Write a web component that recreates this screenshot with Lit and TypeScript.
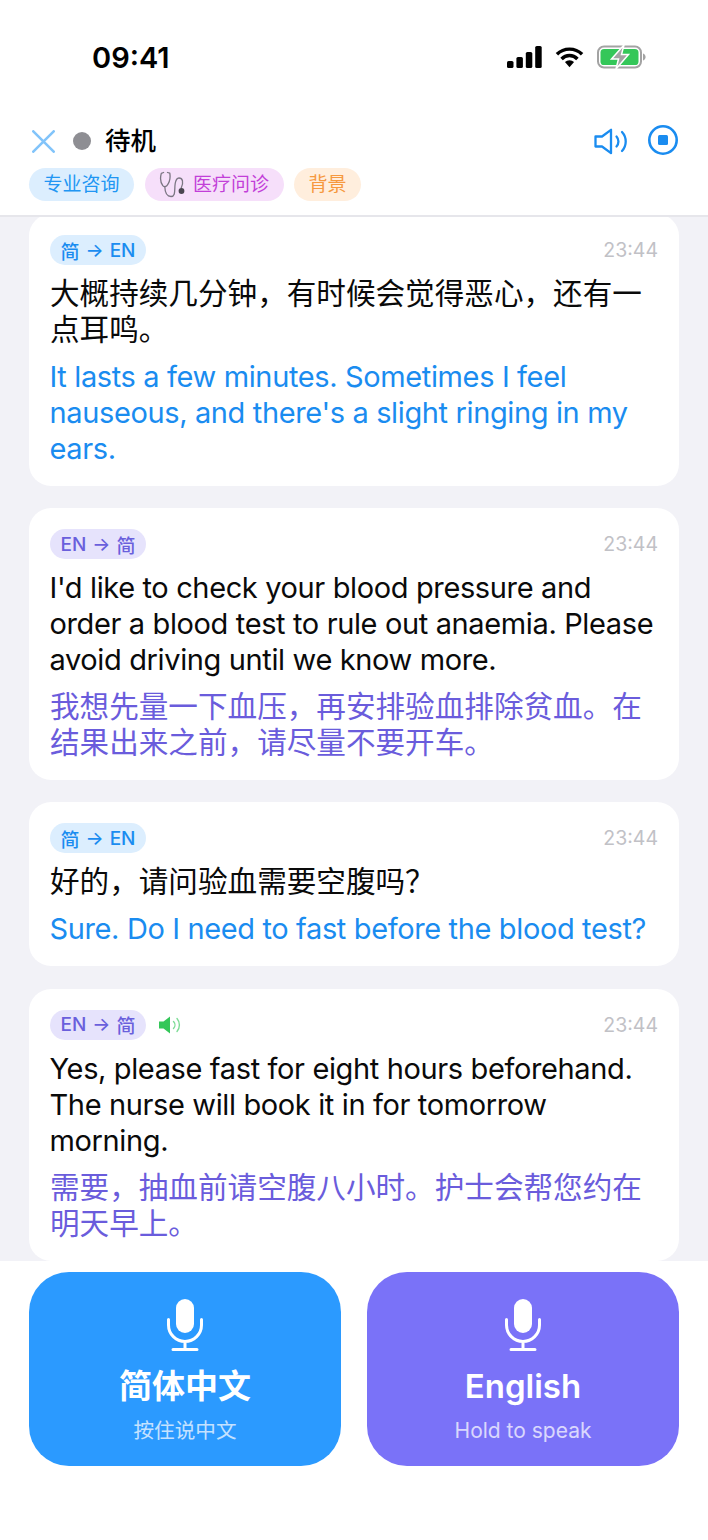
import { LitElement, html, css } from "lit";
import { customElement } from "lit/decorators.js";

const mic = html`<svg class="mic" width="38" height="52" viewBox="0 0 38 52" fill="none">
  <rect x="10" y="0" width="18" height="34" rx="9" fill="#fff"/>
  <path d="M2.5 20.5v5.5a16.5 16.5 0 0 0 33 0v-5.5M19 43v7M7 50.5h24" stroke="#fff" stroke-width="3" stroke-linecap="round"/>
</svg>`;

type Msg = { zh: boolean; src: string; dst: string; audio?: boolean };
const msgs: Msg[] = [
  { zh: true, src: "大概持续几分钟，有时候会觉得恶心，还有一点耳鸣。", dst: "It lasts a few minutes. Sometimes I feel nauseous, and there's a slight ringing in my ears." },
  { zh: false, src: "I'd like to check your blood pressure and order a blood test to rule out anaemia. Please avoid driving until we know more.", dst: "我想先量一下血压，再安排验血排除贫血。在结果出来之前，请尽量不要开车。" },
  { zh: true, src: "好的，请问验血需要空腹吗？", dst: "Sure. Do I need to fast before the blood test?" },
  { zh: false, src: "Yes, please fast for eight hours beforehand. The nurse will book it in for tomorrow morning.", dst: "需要，抽血前请空腹八小时。护士会帮您约在明天早上。", audio: true },
];

@customElement("app-root")
export class AppRoot extends LitElement {
  static styles = css`
    :host { display: block; width: 708px; height: 1540px; font-family: Inter, "Noto Sans CJK SC", sans-serif; background: #fff; color: #000; }
    * { box-sizing: border-box; }
    .page { height: 1540px; display: flex; flex-direction: column; }
    .status { height: 116px; flex: none; display: flex; justify-content: space-between; align-items: flex-start; padding: 41px 62px 0 92px; }
    .clock { font-size: 29px; line-height: 34px; font-weight: 600; }
    .sysicons { display: flex; align-items: flex-start; gap: 13px; padding-top: 5px; }
    .batt { margin-top: -1px; }
    .header { height: 101px; flex: none; padding: 0 30px 0 29px; border-bottom: 2px solid #e6e6eb; }
    .top { display: flex; align-items: center; height: 50px; }
    .close { margin-left: 3px; }
    .dot { width: 18px; height: 18px; border-radius: 50%; background: #8e8e93; margin-left: 18px; }
    .state { font-size: 25.5px; line-height: 50px; margin-left: 14px; font-weight: 500; }
    .spacer { flex: 1; }
    .stop { margin-left: 20px; margin-top: -2px; }
    .chips { display: flex; gap: 10.5px; margin-top: 2px; }
    .chip { height: 33px; border-radius: 17px; padding: 0 14.5px; font-size: 19px; line-height: 33px; display: flex; align-items: center; gap: 8px; }
    .c1 { background: #dceefe; color: #2196f3; }
    .c2 { background: #f6dffa; color: #c23fd8; }
    .c3 { background: #ffeedd; color: #f6993f; }
    .list { height: 1044px; flex: none; overflow: hidden; background: #f2f2f7; }
    .stack { margin-top: -3px; padding: 0 29px; display: flex; flex-direction: column; gap: 22.2px; }
    .card { background: #fff; border-radius: 22px; padding: 21px 21px 19px; display: flex; flex-direction: column; }
    .meta { display: flex; align-items: center; height: 30px; }
    .badge { height: 30px; width: 96px; border-radius: 15px; font-size: 19px; font-weight: 500; display: flex; align-items: center; justify-content: center; gap: 6px; }
    .zh .badge { background: #dceefe; color: #1a8cf0; }
    .en .badge { background: #e6e3fc; color: #6a5fdc; }
    .audio { margin-left: 13px; }
    .time { margin-left: auto; font-size: 19.5px; color: #c1c1c6; }
    .src, .dst { line-height: 36px; }
    .src { color: #0a0a0a; }
    .lz { font-size: 29.6px; margin-top: 10px; margin-bottom: 1px; }
    .le { font-size: 29px; letter-spacing: -0.37px; margin-top: 11px; margin-left: -0.5px; }
    .zh .dst { color: #1a8cf0; }
    .en .dst { color: #6a5cdc; }
    .footer { flex: 1; background: #fff; display: grid; grid-template-columns: 312px 312px; justify-content: space-between; padding: 11px 29px 74px; align-items: start; }
    .btn { height: 194px; border-radius: 40px; display: flex; flex-direction: column; align-items: center; color: #fff; padding-top: 27px; }
    .blue { background: #2b9aff; }
    .purple { background: #7a72f8; }
    .mic { display: block; }
    .name { font-size: 33px; line-height: 40px; font-weight: 700; margin-top: 15px; }
    .purple .name { font-weight: 600; }
    .hint { font-size: 20.6px; line-height: 28px; margin-top: 11px; opacity: .72; }
    .purple .hint { font-size: 21px; }
  `;

  render() {
    return html`<div class="page">
      <div class="status">
        <div class="clock">09:41</div>
        <div class="sysicons">
          <svg width="35" height="22" viewBox="0 0 35 22"><rect x="0" y="15" width="6.5" height="7" rx="1.6"/><rect x="9.4" y="11" width="6.5" height="11" rx="1.6"/><rect x="18.8" y="6" width="6.5" height="16" rx="1.6"/><rect x="28.2" y="0" width="6.5" height="22" rx="1.6"/></svg>
          <svg width="29" height="22" viewBox="0 0 30 22" fill="none" stroke="#000" stroke-width="3.6"><path d="M2 8.2a18.5 18.5 0 0 1 26 0M6.8 13a11.5 11.5 0 0 1 16.4 0"/><path d="M10.3 16.3a6.4 6.4 0 0 1 9.4 0L15 21.6z" fill="#000" stroke="none"/></svg>
          <svg class="batt" width="49" height="24" viewBox="0 0 49 24" fill="none"><rect x="1" y="1.5" width="43" height="21" rx="6" stroke="#a3a3a3" stroke-width="2"/><rect x="3.5" y="4" width="38" height="16" rx="3.6" fill="#34c759"/><path d="M46 8.5c1.7.6 2.6 2 2.6 3.5s-.9 2.9-2.6 3.5z" fill="#a3a3a3"/><path d="M27 0 14.5 14h7L19 24 31.5 9.5h-7z" fill="#a3a3a3" stroke="#fff" stroke-width="1.5"/></svg>
        </div>
      </div>
      <div class="header">
        <div class="top">
          <svg class="close" width="23" height="23" viewBox="0 0 23 23" fill="none" stroke="#82c4fa" stroke-width="2.6" stroke-linecap="round"><path d="M1.3 1.3 21.7 21.7M21.7 1.3 1.3 21.7"/></svg>
          <span class="dot"></span>
          <span class="state">待机</span>
          <span class="spacer"></span>
          <svg width="34" height="27" viewBox="0 0 34 27" fill="none" stroke="#1a8cf0" stroke-width="2.3" stroke-linecap="round" stroke-linejoin="round"><path d="M1.5 8.5h6.5L17 1.8v23.4L8 18.5H1.5z"/><path d="M22.5 8.5a7.5 7.5 0 0 1 0 10M28 4a14 14 0 0 1 0 19"/></svg>
          <svg class="stop" width="30" height="30" viewBox="0 0 30 30" fill="none"><circle cx="15" cy="15" r="13.7" stroke="#1a8cf0" stroke-width="2.6"/><rect x="10" y="10" width="10" height="10" rx="1.5" fill="#1a8cf0"/></svg>
        </div>
        <div class="chips">
          <div class="chip c1">专业咨询</div>
          <div class="chip c2">
            <svg width="26" height="27" viewBox="0 0 26 27" fill="none" stroke="#7b7683" stroke-width="1.3" stroke-linecap="round" stroke-linejoin="round">
              <path d="M4.6 1.5 2.3 2.3C1 7 1.5 11.5 3.8 14.6 5 16 6.5 16 7.8 14.8 10.5 11.6 11.6 7 10.8 2.2L8.5 1.5"/>
              <path d="M5.8 15.8C6 21 8 25.5 12 25.5c5 0 3.2-7 4.2-13C16.8 9 18 7 20 7c3.5 0 5 4 2.2 10"/>
              <circle cx="22.5" cy="20" r="2.9" fill="#4a4650" stroke="none"/>
            </svg>
            <span>医疗问诊</span>
          </div>
          <div class="chip c3">背景</div>
        </div>
      </div>
      <div class="list"><div class="stack">
        ${msgs.map((m) => html`<div class="card ${m.zh ? "zh" : "en"}">
          <div class="meta">
            <div class="badge">${m.zh ? html`<span>简</span><span>→</span><span>EN</span>` : html`<span>EN</span><span>→</span><span>简</span>`}</div>
            ${m.audio ? html`<svg class="audio" width="23" height="18" viewBox="0 0 23 18" fill="none"><path d="M0 5.5h4.5L11 .5v17l-6.5-5H0z" fill="#34c759"/><path d="M14.5 5.5a5 5 0 0 1 0 7M18 2.5a10 10 0 0 1 0 13" stroke="#7ddc96" stroke-width="1.4" stroke-linecap="round"/></svg>` : ""}
            <span class="time">23:44</span>
          </div>
          <div class="src ${m.zh ? "lz" : "le"}">${m.src}</div>
          <div class="dst ${m.zh ? "le" : "lz"}">${m.dst}</div>
        </div>`)}
      </div></div>
      <div class="footer">
        <div class="btn blue">${mic}<div class="name">简体中文</div><div class="hint">按住说中文</div></div>
        <div class="btn purple">${mic}<div class="name">English</div><div class="hint">Hold to speak</div></div>
      </div>
    </div>`;
  }
}
